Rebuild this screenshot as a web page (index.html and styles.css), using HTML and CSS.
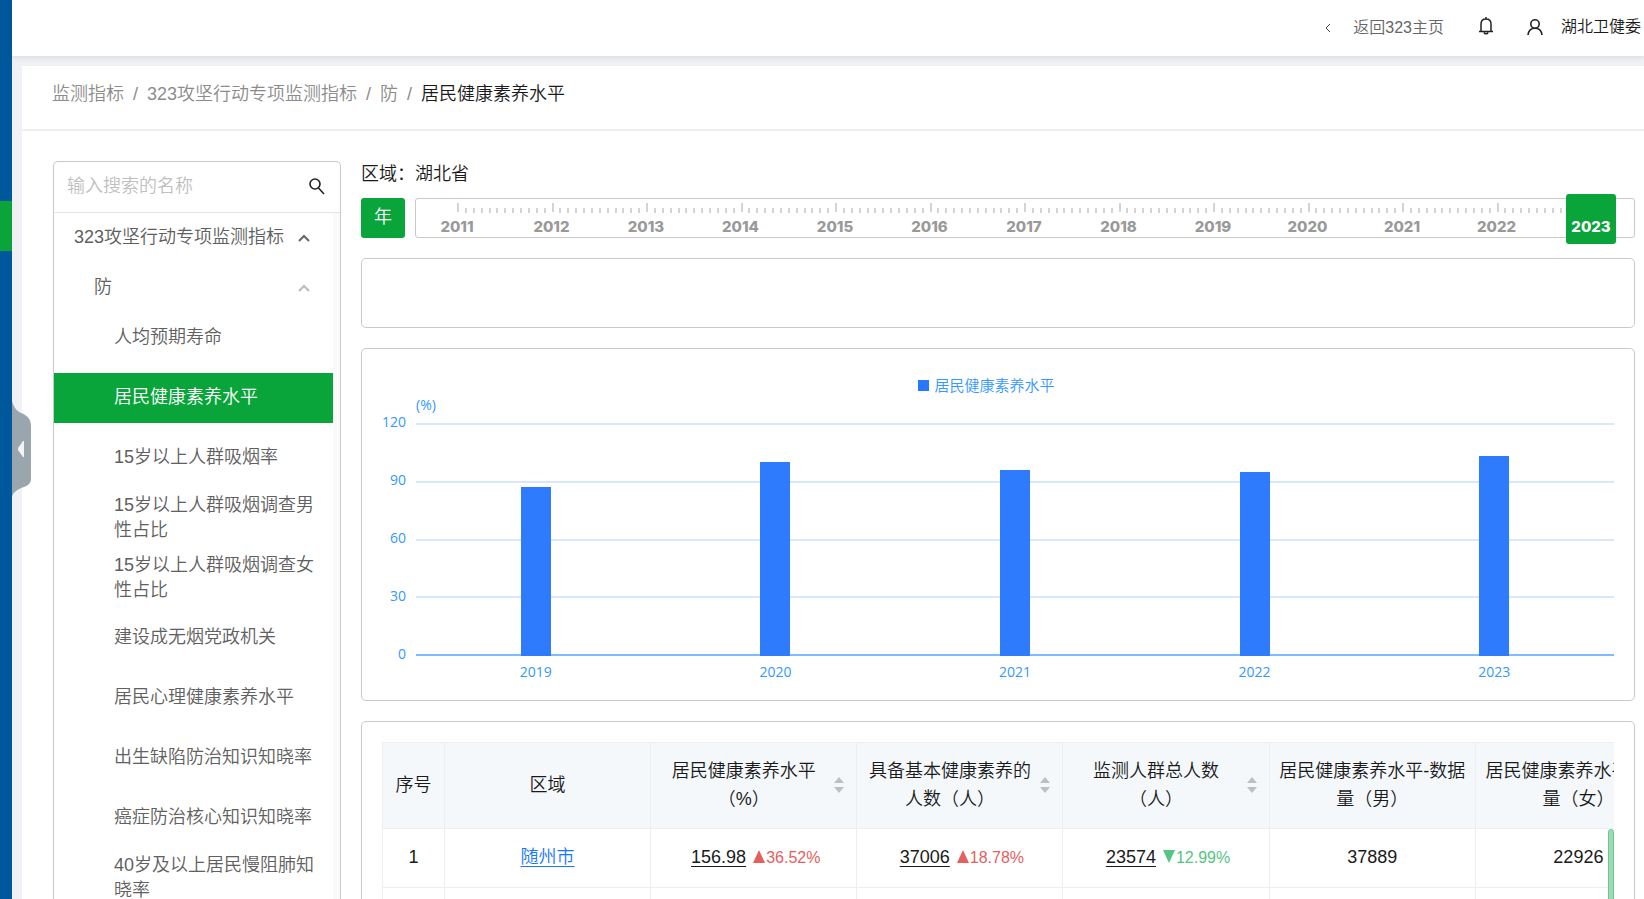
FILE: index.html
```html
<!DOCTYPE html>
<html lang="zh-CN">
<head>
<meta charset="utf-8">
<title>居民健康素养水平</title>
<link rel="stylesheet" href="styles.css">
</head>
<body>
<div class="app">
  <div class="rail"><div class="rail-active"></div></div>
  <button class="collapse" aria-label="收起菜单">
    <svg width="19" height="96" viewBox="0 0 19 96"><path d="M0 0C2 7 5 10 9 12C15 14 19 18 19 25V77C19 82 17 84 12 86C6 88 1 91 0 96Z" fill="#9aa6ae"/><path d="M12 40V56L11 56L6 49V47L11 40Z" fill="#f2f4f6"/></svg>
  </button>
  <div class="main">
    <header class="topbar">
      <a class="back" href="#"><svg width="6" height="8" viewBox="0 0 6 8"><path d="M5 0L1 4L5 8" fill="none" stroke="#444" stroke-width="1"/></svg><span>返回323主页</span></a>
      <button class="icon-btn bell" aria-label="通知"><svg width="14" height="18" viewBox="0 0 14 18" fill="none" stroke="#222" stroke-width="1.500"><path d="M7 0V2M2 14V7C2 4 4 2 7 2S12 4 12 7V14M0 14.500H14M5 15.500C5.400 17.300 8.600 17.300 9 15.500"/></svg></button>
      <button class="user"><svg width="16" height="16" viewBox="0 0 16 16" fill="none" stroke="#222" stroke-width="1.600"><circle cx="8" cy="5" r="4.200"/><path d="M1 16C1.500 12 4 9.300 8 9.300S14.500 12 15 16"/></svg><span>湖北卫健委</span></button>
    </header>
    <div class="page">
      <nav class="crumbs" aria-label="导航">
        <a href="#">监测指标</a><i>/</i><a href="#">323攻坚行动专项监测指标</a><i>/</i><a href="#">防</a><i>/</i><strong>居民健康素养水平</strong>
      </nav>
      <div class="content">
        <aside class="side">
          <div class="search">
            <input type="text" placeholder="输入搜索的名称" aria-label="输入搜索的名称">
            <button class="icon-btn" aria-label="搜索"><svg width="16" height="17" viewBox="0 0 16 17" fill="none" stroke="#222" stroke-width="1.600"><circle cx="6" cy="6" r="5"/><path d="M9.500 10L15 16"/></svg></button>
          </div>
          <div class="tree">
            <button class="node root"><span>323攻坚行动专项监测指标</span><svg width="12" height="8" viewBox="0 0 12 8"><path d="M1 7L6 2L11 7" fill="none" stroke="#666" stroke-width="2"/></svg></button>
            <button class="node group"><span>防</span><svg width="12" height="8" viewBox="0 0 12 8"><path d="M1 7L6 2L11 7" fill="none" stroke="#bbb" stroke-width="2"/></svg></button>
            <button class="leaf">人均预期寿命</button>
            <button class="leaf current">居民健康素养水平</button>
            <button class="leaf">15岁以上人群吸烟率</button>
            <button class="leaf">15岁以上人群吸烟调查男性占比</button>
            <button class="leaf">15岁以上人群吸烟调查女性占比</button>
            <button class="leaf">建设成无烟党政机关</button>
            <button class="leaf">居民心理健康素养水平</button>
            <button class="leaf">出生缺陷防治知识知晓率</button>
            <button class="leaf">癌症防治核心知识知晓率</button>
            <button class="leaf">40岁及以上居民慢阻肺知晓率</button>
          </div>
        </aside>
        <section class="detail">
          <p class="region">区域：湖北省</p>
          <div class="period">
            <button class="unit">年</button>
            <div class="timeline" id="timeline"></div>
          </div>
          <div class="card summary"></div>
          <div class="card chart">
            <div class="legend"><i></i>居民健康素养水平</div>
            <div class="unit-label">(%)</div>
            <div class="plot">
              <div class="scale"><span>120</span><span>90</span><span>60</span><span>30</span><span>0</span></div>
              <div class="lines"><i></i><i></i><i></i><i></i></div>
              <div class="bars" id="bars"></div>
              <div class="years"><span>2019</span><span>2020</span><span>2021</span><span>2022</span><span>2023</span></div>
            </div>
          </div>
          <div class="card data">
            <div class="table-wrap">
              <table>
                <colgroup><col class="c-no"><col><col><col><col><col><col></colgroup>
                <thead><tr>
                  <th>序号</th><th>区域</th>
                  <th><div class="sortable"><span>居民健康素养水平（%）</span><svg width="10" height="16" viewBox="0 0 10 16" fill="#bfbfbf"><path d="M5 0L10 6H0ZM5 16L0 10H10Z"/></svg></div></th>
                  <th><div class="sortable"><span>具备基本健康素养的人数（人）</span><svg width="10" height="16" viewBox="0 0 10 16" fill="#bfbfbf"><path d="M5 0L10 6H0ZM5 16L0 10H10Z"/></svg></div></th>
                  <th><div class="sortable"><span>监测人群总人数（人）</span><svg width="10" height="16" viewBox="0 0 10 16" fill="#bfbfbf"><path d="M5 0L10 6H0ZM5 16L0 10H10Z"/></svg></div></th>
                  <th>居民健康素养水平-数据量（男）</th><th>居民健康素养水平-数据量（女）</th>
                </tr></thead>
                <tbody>
                  <tr><td>1</td><td><a class="place" href="#">随州市</a></td>
                  <td class="trend"><a href="#">156.98</a> <span class="up"><svg width="12" height="13" viewBox="0 0 12 13"><path d="M6 0L12 13H0Z" fill="currentColor"/></svg>36.52%</span></td>
                  <td class="trend"><a href="#">37006</a> <span class="up"><svg width="12" height="13" viewBox="0 0 12 13"><path d="M6 0L12 13H0Z" fill="currentColor"/></svg>18.78%</span></td>
                  <td class="trend"><a href="#">23574</a> <span class="down"><svg width="12" height="13" viewBox="0 0 12 13"><path d="M6 13L0 0H12Z" fill="currentColor"/></svg>12.99%</span></td>
                  <td>37889</td><td>22926</td></tr>
                  <tr><td></td><td></td><td></td><td></td><td></td><td></td><td></td></tr>
                </tbody>
              </table>
              <div class="thumb"></div>
            </div>
          </div>
        </section>
      </div>
    </div>
  </div>
</div>
<script src="app.js"></script>
</body>
</html>
```
FILE: app.js
```
const timeline = document.getElementById('timeline');
for (let year = 2011; year <= 2023; year++) {
  const cell = document.createElement('div');
  cell.className = year === 2023 ? 'year last' : 'year';
  if (year < 2023) {
    const ticks = document.createElement('div');
    ticks.className = 'ticks';
    for (let m = 0; m < 12; m++) ticks.appendChild(document.createElement('i'));
    cell.appendChild(ticks);
  }
  const label = document.createElement('button');
  label.textContent = year;
  label.className = year === 2023 ? 'year-name selected' : 'year-name';
  cell.appendChild(label);
  timeline.appendChild(cell);
}

const bars = document.getElementById('bars');
[87, 100, 96, 95, 103].forEach(value => {
  const slot = document.createElement('div');
  const bar = document.createElement('i');
  bar.style.height = value / 120 * 100 + '%';
  slot.appendChild(bar);
  bars.appendChild(slot);
});
```
FILE: styles.css
```css
* { box-sizing: border-box; }
html, body { margin: 0; height: 100%; }
body {
  overflow: hidden;
  background: #eff1f5;
  color: #1a1a1a;
  font: 18px/30px "Liberation Sans", "Noto Sans CJK SC", sans-serif;
  font-weight: 350;
}
button { border: 0; padding: 0; background: none; color: inherit; font: inherit; cursor: pointer; }
a { color: inherit; }
svg { display: block; flex: none; }
.app { position: relative; display: flex; height: 100vh; overflow: hidden; }
.rail { flex: none; width: 12px; padding-top: 201px; background: #00589c; }
.rail-active { height: 50px; background: #09a43a; }
.collapse { position: absolute; z-index: 2; left: 12px; top: 401px; }
.main { flex: 1; min-width: 0; display: flex; flex-direction: column; }
.topbar {
  flex: none; display: flex; align-items: center; justify-content: flex-end;
  height: 56px; padding-right: 3px; background: #fff; font-size: 16px; line-height: 24px;
  box-shadow: 0 1px 6px rgba(0, 21, 41, .12);
}
.back { display: flex; align-items: center; gap: 22px; color: #666; text-decoration: none; }
.bell { margin: 0 34px 4px 35px; }
.user { display: flex; align-items: center; gap: 18px; margin-bottom: 3px; }
.page { flex: 1; min-height: 0; display: flex; flex-direction: column; margin: 10px 0 0 10px; background: #fff; overflow: hidden; }
.crumbs {
  flex: none; display: flex; padding: 13px 30px 20px; color: #8c8c8c;
  border-bottom: 2px solid #eee;
}
.crumbs a { text-decoration: none; }
.crumbs i { margin: 0 9px; font-style: normal; }
.crumbs strong { color: #1a1a1a; font-weight: 350; }
.content { flex: 1; min-height: 0; display: flex; gap: 20px; padding: 30px 9px 0 31px; }
.side {
  flex: none; width: 288px; display: flex; flex-direction: column;
  border: 1px solid #c9c9c9; border-bottom: 0; border-radius: 5px 5px 0 0;
}
.search { flex: none; display: flex; align-items: center; height: 51px; padding: 0 15px 2px 13px; border-bottom: 1px solid #e4e4e4; }
.search input { flex: 1; min-width: 0; padding: 0; border: 0; outline: 0; background: none; font: inherit; }
.search input::placeholder { color: #bfbfbf; opacity: 1; }
.tree { flex: 1; min-height: 0; overflow: hidden; border-right: 7px solid #fafafa; color: #606060; }
.node { display: flex; align-items: center; justify-content: space-between; width: 100%; height: 50px; padding: 0 23px 2px 20px; }
.node svg { margin-top: 2px; }
.group { padding-left: 40px; }
.leaf {
  display: flex; align-items: center; width: 100%; height: 50px; margin-bottom: 10px;
  padding: 0 10px 1px 60px; line-height: 25px; text-align: left;
}
.leaf.current { background: #09a43a; color: #fff; }
.detail { flex: 1; min-width: 0; }
.region { margin: -2px 0 9px; }
.period { display: flex; gap: 10px; margin-bottom: 20px; }
.unit { width: 44px; height: 40px; padding-bottom: 2px; border-radius: 3px; background: #09a43a; color: #fff; }
.timeline { flex: 1; display: flex; height: 40px; padding: 4px 43px 0 41px; border: 1px solid #c9c9c9; border-radius: 3px; }
.year { position: relative; flex: 1; display: flex; flex-direction: column; justify-content: space-between; align-items: flex-start; }
.year.last { flex: 0 0 0px; }
.ticks { display: flex; align-self: stretch; justify-content: space-between; align-items: flex-end; height: 10px; }
.ticks i { flex: 1; height: 5px; border-left: 2px solid #d4d4d4; }
.ticks i:first-child { height: 9px; align-self: flex-start; }
.year-name { width: 40px; margin-left: -20px; color: #999; font: 800 15px/20px Inter, sans-serif; }
.year-name.selected {
  position: absolute; top: -9px; left: -5px; width: 50px; height: 50px; padding-top: 15px;
  border-radius: 3px; background: #09a43a; color: #fff;
}
.card { border: 1px solid #c9c9c9; border-radius: 5px; margin-bottom: 20px; }
.summary { height: 70px; }
.chart { padding: 26px 20px 9px; color: #3398ff; font: 14px/20px "Open Sans", "Noto Sans CJK SC", sans-serif; }
.legend { display: flex; justify-content: center; align-items: center; gap: 5px; padding-right: 23px; font-size: 15px; font-weight: 350; }
.legend i { width: 11px; height: 11px; background: #2878ff; }
.unit-label { padding-left: 34px; }
.plot { display: grid; grid-template-columns: 24px 1fr; grid-template-rows: 233px 35px; column-gap: 10px; padding-top: 8px; }
.scale { display: flex; flex-direction: column; justify-content: space-between; margin: -11px 0 -8px; text-align: right; }
.lines { grid-area: 1 / 2; display: flex; flex-direction: column; border-bottom: 2px solid #7fbcff; }
.lines i { flex: 1; border-top: 2px solid #d6e9fc; }
.bars { grid-area: 1 / 2; display: flex; }
.bars div { flex: 1; display: flex; align-items: flex-end; justify-content: center; }
.bars i { width: 30px; background: #2f7bfe; }
.years { grid-column: 2; display: flex; padding-top: 6px; }
.years span { flex: 1; text-align: center; }
.data { height: 400px; padding: 20px 20px 0; }
.table-wrap { position: relative; overflow: hidden; }
table { width: 1300px; table-layout: fixed; border-collapse: collapse; line-height: 28px; }
.c-no { width: 62px; }
th, td { border: 1px solid #eceef0; padding: 0 8px 2px; text-align: center; font-weight: 350; }
th { height: 86px; background: #f4f8fb; }
td { height: 59px; }
.trend { padding-left: 12px; }
.sortable { display: flex; align-items: center; gap: 6px; padding-right: 4px; }
.sortable span { flex: 1; }
td a { text-underline-offset: 3px; }
.place { color: #1677ff; }
.up, .down { margin-left: 2px; font-size: 16px; }
.up svg, .down svg { display: inline-block; margin-right: 1px; }
.up { color: #e4605e; }
.down { color: #55c484; }
.thumb { position: absolute; right: 0; top: 87px; width: 6px; height: 200px; border-radius: 3px; background: #9ddcb3; border: 1px solid #6cc98d; }
```
